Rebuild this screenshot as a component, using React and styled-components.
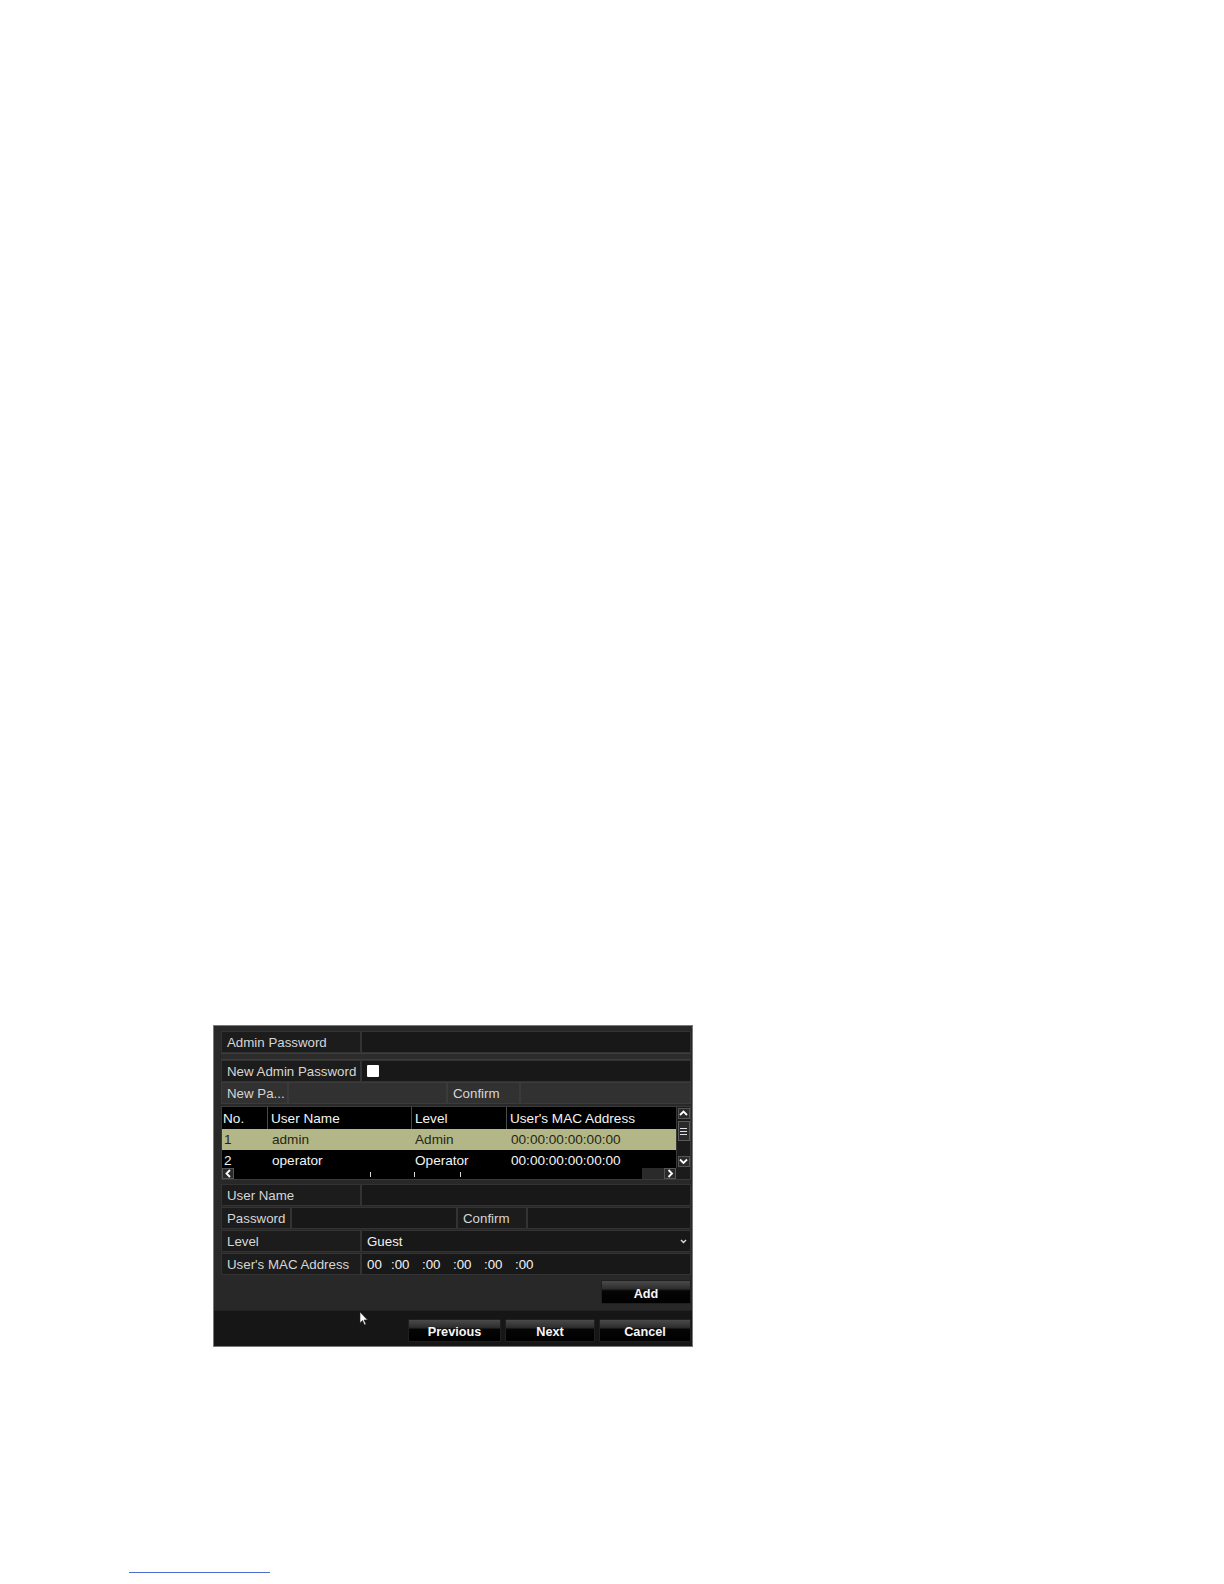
import React from "react";
import styled, { createGlobalStyle } from "styled-components";

const GlobalStyle = createGlobalStyle`
  html, body {
    margin: 0;
    padding: 0;
    background: #ffffff;
  }
  * {
    box-sizing: border-box;
  }
`;

const Page = styled.div`
  width: 1224px;
  height: 1584px;
  padding: 1025px 0 0 213px;
  font-family: "Liberation Sans", Arial, sans-serif;
  font-size: 13.3px;
  position: relative;
`;

const Dialog = styled.div`
  width: 480px;
  height: 322px;
  border: 1px solid #7a7a7a;
  background: #282828;
  display: flex;
  flex-direction: column;
  position: relative;
`;

const Body = styled.div`
  flex: 1;
  padding: 5px 1px 0 7px;
  display: flex;
  flex-direction: column;
`;

const FieldRow = styled.div`
  display: grid;
  grid-template-columns: ${(p) => p.$cols || "140px 1fr"};
  height: 22px;
  flex-shrink: 0;
  margin-top: ${(p) => p.$mt || 0}px;
  background: ${(p) => (p.$dim ? "#2f2f2f" : "transparent")};
`;

const Cell = styled.div`
  display: flex;
  align-items: center;
  justify-content: space-between;
  padding: 0 3px 0 5px;
  background: ${(p) => (p.$dim ? "#313131" : p.$label ? "#1c1c1c" : "#181818")};
  border: 1px solid ${(p) => (p.$dim ? "#3b3b3b" : "#333333")};
  color: ${(p) => (p.$value ? "#f2f2f2" : "#d6d6d6")};
  white-space: nowrap;
  overflow: hidden;
`;

const Band = styled.div`
  height: 7px;
  flex-shrink: 0;
  border-top: 1px solid #3c3c3c;
  border-bottom: 1px solid #3c3c3c;
  background: #2c2c2c;
`;

const CheckBox = styled.span`
  width: 12px;
  height: 12px;
  background: #ffffff;
  border-radius: 1px;
`;

const TableBox = styled.div`
  margin-top: 2px;
  flex-shrink: 0;
  background: #000000;
  border: 1px solid #3a3a3a;
  display: flex;
  flex-direction: column;
`;

const TableMain = styled.div`
  display: flex;
`;

const Rows = styled.div`
  flex: 1;
  height: 61px;
  overflow: hidden;
  font-size: 13.6px;
`;

const TRow = styled.div`
  display: grid;
  grid-template-columns: 46px 144px 95px 1fr;
  height: ${(p) => p.$h || 21}px;
  background: ${(p) => (p.$selected ? "#b3b788" : "#000000")};
  color: ${(p) => (p.$selected ? "#262614" : "#f4f4f4")};
`;

const TCell = styled.div`
  display: flex;
  align-items: center;
  padding-left: ${(p) => p.$pl ?? 3}px;
  border-right: ${(p) => (p.$head ? "1px solid #4a4a4a" : "none")};
  white-space: nowrap;
  overflow: hidden;
`;

const VScroll = styled.div`
  width: 14px;
  background: #1b1b1b;
  border-left: 1px solid #3a3a3a;
  display: flex;
  flex-direction: column;
  align-items: center;
  padding: 1px 0;
  gap: 2px;
`;

const ArrowBox = styled.div`
  width: 12px;
  height: 11px;
  background: #2a2a2a;
  border: 1px solid #555;
  display: flex;
  align-items: center;
  justify-content: center;
  flex-shrink: 0;
`;

const Thumb = styled.div`
  width: 12px;
  height: 20px;
  background: #2a2a2a;
  border: 1px solid #5a5a5a;
  display: flex;
  flex-direction: column;
  justify-content: center;
  align-items: center;
  gap: 2px;
`;

const Grip = styled.span`
  width: 7px;
  height: 1px;
  background: #e0e0e0;
`;

const Spacer = styled.div`
  flex: 1;
`;

const HScroll = styled.div`
  height: 11px;
  display: flex;
  align-items: stretch;
  background: #000;
`;

const Track = styled.div`
  flex: 1;
  position: relative;
  background: #000;
`;

const Tick = styled.span`
  position: absolute;
  bottom: 2px;
  width: 1px;
  height: 5px;
  background: #d8d8d8;
`;

const Gutter = styled.div`
  width: 22px;
  background: #2a2a2a;
`;

const Corner = styled.div`
  width: 14px;
  background: #1b1b1b;
`;

const MacValue = styled.div`
  display: flex;
  color: #f4f4f4;
`;

const MacPart = styled.span`
  width: ${(p) => p.$w}px;
  flex-shrink: 0;
`;

const AddArea = styled.div`
  flex: 1;
  display: flex;
  justify-content: flex-end;
  align-items: flex-start;
  padding-top: 5px;
`;

const Footer = styled.div`
  height: 36px;
  flex-shrink: 0;
  background: #161616;
  border-top: 1px solid #222;
  display: flex;
  justify-content: flex-end;
  align-items: flex-end;
  gap: 4px;
  padding: 0 1px 4px 0;
`;

const Button = styled.button`
  width: ${(p) => p.$w || 91}px;
  height: ${(p) => p.$h || 23}px;
  border: 1px solid #202020;
  border-radius: 1px;
  background: linear-gradient(to bottom, #4a4a4a 0%, #2e2e2e 35%, #050505 45%, #000 100%);
  color: #f6f6f6;
  font-family: "Liberation Sans", Arial, sans-serif;
  font-weight: bold;
  font-size: 12.7px;
  padding: 3px 0 0;
`;

const Cursor = styled.svg`
  position: absolute;
  left: 145px;
  top: 285px;
`;

const FootRule = styled.div`
  position: absolute;
  left: 129px;
  top: 1572px;
  width: 141px;
  height: 1px;
  background: #4d6bd0;
`;

const Chevron = ({ dir }) => {
  const d =
    dir === "up"
      ? "M1 6 L4.5 2.5 L8 6"
      : dir === "down"
      ? "M1 2.5 L4.5 6 L8 2.5"
      : dir === "left"
      ? "M6 1 L2.5 4.5 L6 8"
      : "M2.5 1 L6 4.5 L2.5 8";
  return (
    <svg width="9" height="9" viewBox="0 0 9 9">
      <path d={d} fill="none" stroke="#fff" strokeWidth="1.8" />
    </svg>
  );
};

const users = [
  { no: "1", name: "admin", level: "Admin", mac: "00:00:00:00:00:00" },
  { no: "2", name: "operator", level: "Operator", mac: "00:00:00:00:00:00" },
];

const macParts = ["00", ":00", ":00", ":00", ":00", ":00"];

export default function App() {
  return (
    <>
      <GlobalStyle />
      <Page>
        <Dialog>
          <Body>
            <FieldRow>
              <Cell $label>Admin Password</Cell>
              <Cell />
            </FieldRow>
            <Band />
            <FieldRow>
              <Cell $label>New Admin Password</Cell>
              <Cell>
                <CheckBox />
              </Cell>
            </FieldRow>
            <FieldRow $cols="67px 159px 73px 1fr" $dim>
              <Cell $dim>New Pa...</Cell>
              <Cell $dim />
              <Cell $dim>Confirm</Cell>
              <Cell $dim />
            </FieldRow>

            <TableBox>
              <TableMain>
                <Rows>
                  <TRow $h={22}>
                    <TCell $head $pl={1}>No.</TCell>
                    <TCell $head>User Name</TCell>
                    <TCell $head>Level</TCell>
                    <TCell>User's MAC Address</TCell>
                  </TRow>
                  {users.map((u, i) => (
                    <TRow key={u.no} $selected={i === 0}>
                      <TCell $pl={2}>{u.no}</TCell>
                      <TCell $pl={4}>{u.name}</TCell>
                      <TCell>{u.level}</TCell>
                      <TCell $pl={4}>{u.mac}</TCell>
                    </TRow>
                  ))}
                </Rows>
                <VScroll>
                  <ArrowBox>
                    <Chevron dir="up" />
                  </ArrowBox>
                  <Thumb>
                    <Grip />
                    <Grip />
                    <Grip />
                  </Thumb>
                  <Spacer />
                  <ArrowBox>
                    <Chevron dir="down" />
                  </ArrowBox>
                </VScroll>
              </TableMain>
              <HScroll>
                <ArrowBox>
                  <Chevron dir="left" />
                </ArrowBox>
                <Track>
                  <Tick style={{ left: 136 }} />
                  <Tick style={{ left: 180 }} />
                  <Tick style={{ left: 226 }} />
                </Track>
                <Gutter />
                <ArrowBox>
                  <Chevron dir="right" />
                </ArrowBox>
                <Corner />
              </HScroll>
            </TableBox>

            <FieldRow $mt={4}>
              <Cell $label>User Name</Cell>
              <Cell />
            </FieldRow>
            <FieldRow $cols="70px 166px 70px 1fr" $mt={1}>
              <Cell $label>Password</Cell>
              <Cell />
              <Cell $label>Confirm</Cell>
              <Cell />
            </FieldRow>
            <FieldRow $mt={1}>
              <Cell $label>Level</Cell>
              <Cell $value>
                Guest
                <svg width="7" height="5" viewBox="0 0 7 5">
                  <path d="M1 1 L3.5 3.5 L6 1" fill="none" stroke="#ddd" strokeWidth="1.4" />
                </svg>
              </Cell>
            </FieldRow>
            <FieldRow $mt={1}>
              <Cell $label>User's MAC Address</Cell>
              <Cell $value>
                <MacValue>
                  {macParts.map((m, i) => (
                    <MacPart key={i} $w={i === 0 ? 24 : 31}>
                      {m}
                    </MacPart>
                  ))}
                </MacValue>
              </Cell>
            </FieldRow>

            <AddArea>
              <Button $w={90} $h={24}>Add</Button>
            </AddArea>
          </Body>
          <Footer>
            <Button $w={93}>Previous</Button>
            <Button $w={90}>Next</Button>
            <Button $w={92}>Cancel</Button>
          </Footer>
          <Cursor width="10" height="15" viewBox="0 0 10 15">
            <path d="M1 1 L1 12 L3.5 9.5 L5.5 14 L7 13.3 L5 9 L8.5 9 Z" fill="#fff" stroke="#222" strokeWidth="0.6" />
          </Cursor>
        </Dialog>
        <FootRule />
      </Page>
    </>
  );
}
